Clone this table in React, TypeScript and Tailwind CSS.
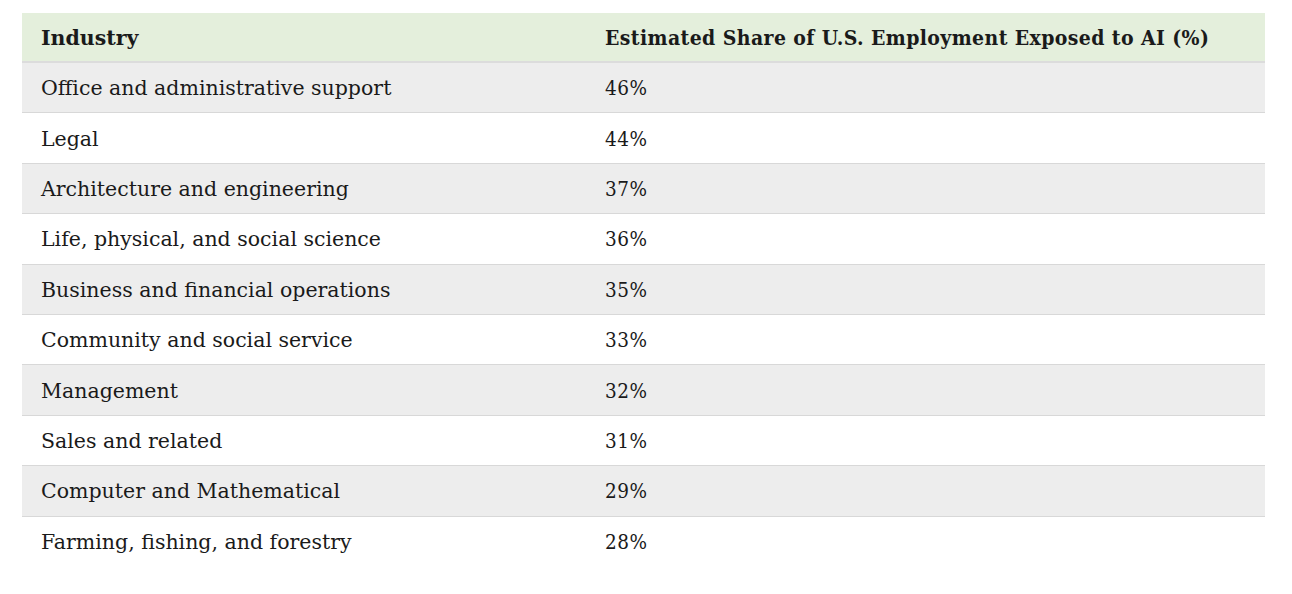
import React from "react";

const rows: [string, string][] = [
  ["Office and administrative support", "46%"],
  ["Legal", "44%"],
  ["Architecture and engineering", "37%"],
  ["Life, physical, and social science", "36%"],
  ["Business and financial operations", "35%"],
  ["Community and social service", "33%"],
  ["Management", "32%"],
  ["Sales and related", "31%"],
  ["Computer and Mathematical", "29%"],
  ["Farming, fishing, and forestry", "28%"],
];

export default function App() {
  return (
    <div className="w-[1292px] h-[594px] bg-white pt-[13px] pl-[22px] text-[#1a1a1a] [font-family:'DejaVu_Serif',serif]">
      <div className="w-[1243px]">
        <div className="flex h-[50px] items-center pt-[2px] bg-[#e4efdc] border-b-2 border-[#dcdcdc] font-bold text-[20.5px]">
          <div className="w-[583px] pl-[19px]">Industry</div>
          <div className="text-[21px] tracking-[0.4px] [font-stretch:condensed] [font-family:'DejaVu_Serif_Condensed','DejaVu_Serif',serif]">Estimated Share of U.S. Employment Exposed to AI (%)</div>
        </div>
        {rows.map(([name, pct], i) => (
          <div
            key={name}
            className={`flex h-[50.4px] items-center pt-[2px] text-[20.5px] ${i % 2 === 0 ? "bg-[#ededed]" : "bg-white"} ${i < rows.length - 1 ? "border-b border-[#d8d8d8]" : ""}`}
          >
            <div className="w-[583px] pl-[19px]">{name}</div>
            <div className="tracking-[0.5px] [font-stretch:condensed] [font-family:'DejaVu_Serif_Condensed','DejaVu_Serif',serif]">{pct}</div>
          </div>
        ))}
      </div>
    </div>
  );
}
